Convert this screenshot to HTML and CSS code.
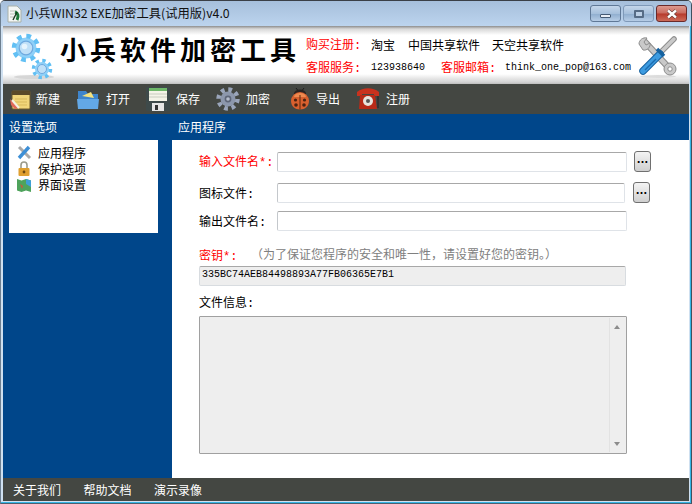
FILE: index.html
```html
<!DOCTYPE html>
<html lang="zh-CN">
<head>
<meta charset="utf-8">
<title>小兵WIN32 EXE加密工具(试用版)v4.0</title>
<link rel="stylesheet" href="styles.css">
</head>
<body>
<div class="window">
  <div class="titlebar">
    <svg class="app-icon" width="16" height="18" viewBox="0 0 16 18"><path d="M1 1h9l4 4v12H1z" fill="#f4f6f4" stroke="#a8b0a8"/><path d="M3 6h7M3 9h4M3 12h4" stroke="#b8c0b8"/><path d="M8 7c3 1 4 4 2 8" stroke="#1d7a3a" stroke-width="3" fill="none"/><path d="M6 15l4-8" stroke="#1a3a22" stroke-width="1.4"/></svg>
    <span class="title-text">小兵WIN32 EXE加密工具(试用版)v4.0</span>
    <div class="win-btns">
      <div class="wb"><span class="wb-min"></span></div>
      <div class="wb wb-mid"><span class="wb-max"></span></div>
      <div class="wb wb-close"><svg width="14" height="10" viewBox="0 0 14 10"><path d="M3 1.500l8 7M11 1.500l-8 7" stroke="#4a2a28" stroke-width="3.600"/><path d="M3 1.500l8 7M11 1.500l-8 7" stroke="#fff" stroke-width="2.400"/></svg></div>
    </div>
  </div>

  <div class="banner">
    <svg class="gears" width="50" height="52" viewBox="0 0 50 52">
      <ellipse cx="24" cy="47" rx="20" ry="2" fill="#d6d6d6"/>
      <circle cx="16" cy="18" r="10.500" fill="#8ed0f8"/>
      <circle cx="16" cy="18" r="12" fill="none" stroke="#62c0f4" stroke-width="4.500" stroke-dasharray="4.700 4.720"/>
      <circle cx="16" cy="18" r="6.800" fill="#bfe0f8" stroke="#6fa9de" stroke-width="1.200"/>
      <circle cx="14.500" cy="16.500" r="2.800" fill="#e6f4fd"/>
      <circle cx="32" cy="39" r="7" fill="#8ed0f8"/>
      <circle cx="32" cy="39" r="8.500" fill="none" stroke="#62c0f4" stroke-width="3.500" stroke-dasharray="3.340 3.340"/>
      <circle cx="32" cy="39" r="4.500" fill="#bfe0f8" stroke="#6fa9de"/>
    </svg>
    <div class="brand">小兵软件加密工具</div>
    <div class="contact">
      <div class="c-row">
        <span class="c-label">购买注册:</span>
        <span class="c-link c-taobao">淘宝</span>
        <span class="c-link c-share">中国共享软件</span>
        <span class="c-link">天空共享软件</span>
      </div>
      <div class="c-row">
        <span class="c-label">客服服务:</span>
        <span class="c-mono c-qq">123938640</span>
        <span class="c-label">客服邮箱:</span>
        <span class="c-mono c-mail">think_one_pop@163.com</span>
      </div>
    </div>
    <svg class="tools" width="42" height="44" viewBox="0 0 42 44">
      <ellipse cx="21" cy="41.500" rx="18" ry="1.500" fill="#dcdcdc"/>
      <path d="M8 7l24 26" stroke="#8d8d8d" stroke-width="6.500" stroke-linecap="round"/>
      <path d="M8 7l24 26" stroke="#c9c9c9" stroke-width="4.500" stroke-linecap="round"/>
      <path d="M2 9c0-4 4-7 8-6l-3 4 2 3 4-2c1 4-3 8-7 7z" fill="#c9c9c9" stroke="#8d8d8d"/>
      <circle cx="33" cy="34" r="6" fill="#c9c9c9" stroke="#8d8d8d"/>
      <circle cx="33" cy="34" r="2.200" fill="#fff" stroke="#8d8d8d"/>
      <path d="M37 4L23 18" stroke="#8d8d8d" stroke-width="5.500" stroke-linecap="round"/>
      <path d="M37 4L23 18" stroke="#c9c9c9" stroke-width="3.500" stroke-linecap="round"/>
      <path d="M23 19L6 36" stroke="#16619f" stroke-width="7.500" stroke-linecap="round"/>
      <path d="M23 19L6 36" stroke="#3d9be0" stroke-width="5.500" stroke-linecap="round"/>
      <path d="M19 24L8 35" stroke="#1a6cb0" stroke-width="1.400"/>
      <path d="M20 14l7 7" stroke="#16619f" stroke-width="3.500"/>
    </svg>
  </div>

  <div class="toolbar">
    <div class="tool tool-new">
      <svg width="22" height="24" viewBox="0 0 22 24"><rect x="3" y="4" width="18" height="18" rx="1" fill="#f2d67a" stroke="#6e5a2c"/><path d="M3 4h18v4H3z" fill="#5c4a28"/><path d="M6 12h12M6 15h12M6 18h12" stroke="#d9b95a"/><path d="M1 12l8 9-3 1-4-4z" fill="#e2685a"/><path d="M3 13l7 8" stroke="#f4f0e0" stroke-width="2"/></svg>
      <span>新建</span>
    </div>
    <div class="tool tool-open">
      <svg width="22" height="22" viewBox="0 0 22 22"><path d="M1 3h8l2 3h10v15H1z" fill="#3e85cc"/><path d="M5 8l9-4 3 6z" fill="#f5e27e"/><path d="M0 11h22l-1 10H1z" fill="#63a8e6"/></svg>
      <span>打开</span>
    </div>
    <div class="tool tool-save">
      <svg width="24" height="24" viewBox="0 0 24 24"><rect x="0" y="0" width="24" height="24" rx="1" fill="#3e4a4a"/><rect x="3" y="1" width="18" height="13" fill="#f4f4e8"/><rect x="3" y="1" width="18" height="3" fill="#6fb86a"/><path d="M3 7h18M3 10h18" stroke="#c8ccc0"/><rect x="6" y="16" width="12" height="8" fill="#e6e6e6"/><rect x="9" y="18" width="3" height="5" fill="#333"/></svg>
      <span>保存</span>
    </div>
    <div class="tool tool-lock">
      <svg width="24" height="24" viewBox="0 0 24 24"><circle cx="12" cy="12" r="7.500" fill="#8c97ac"/><circle cx="12" cy="12" r="9.500" fill="none" stroke="#9aa5ba" stroke-width="4.500" stroke-dasharray="3.730 3.730"/><circle cx="12" cy="12" r="3.400" fill="#5e6678"/><circle cx="12" cy="12" r="1.800" fill="#b6bdcc"/></svg>
      <span>加密</span>
    </div>
    <div class="tool tool-bug">
      <svg width="22" height="24" viewBox="0 0 22 24"><path d="M7 1l3 4M15 1l-3 4" stroke="#1c1c1c"/><ellipse cx="11" cy="6.500" rx="6" ry="4" fill="#2a2422"/><path d="M2 14a9 9 0 0 1 18 0c0 5-4 8.500-9 8.500S2 19 2 14z" fill="#d8602e"/><path d="M5 10a6 4 0 0 1 12 0z" fill="#ee8a50"/><path d="M11 8v14.500" stroke="#5a2a10"/><circle cx="6.500" cy="13" r="1.600" fill="#4a2210"/><circle cx="15.500" cy="13" r="1.600" fill="#4a2210"/><circle cx="7" cy="18" r="1.800" fill="#4a2210"/><circle cx="15" cy="18" r="1.800" fill="#4a2210"/></svg>
      <span>导出</span>
    </div>
    <div class="tool tool-reg">
      <svg width="24" height="24" viewBox="0 0 24 24"><path d="M1 5c6-5 16-5 22 0v4h-5V7H6v2H1z" fill="#c9321e"/><path d="M4 8h15l2 14H3z" fill="#b82a18"/><rect x="21" y="9" width="2" height="12" fill="#333"/><circle cx="12" cy="14" r="5" fill="#e8e4de"/><circle cx="12" cy="14" r="2" fill="#555"/></svg>
      <span>注册</span>
    </div>
  </div>

  <div class="main">
    <aside class="sidebar">
      <div class="pane-title side-title">设置选项</div>
      <ul class="tree">
        <li>
          <svg width="16" height="16" viewBox="0 0 16 16"><path d="M3 2l11 11" stroke="#aaa" stroke-width="3"/><path d="M13 2L3 13" stroke="#3d8fd6" stroke-width="3.400"/></svg>
          应用程序
        </li>
        <li>
          <svg width="16" height="16" viewBox="0 0 16 16"><path d="M5 7V4a3 3 0 0 1 6 0v3" fill="none" stroke="#9b9b8c" stroke-width="1.600"/><rect x="2.500" y="7" width="11" height="8" rx="1" fill="#e0a030"/><circle cx="8" cy="11" r="1.400" fill="#6e4a10"/></svg>
          保护选项
        </li>
        <li>
          <svg width="16" height="16" viewBox="0 0 16 16"><path d="M1 2l4.500 1.500L10 2l5 1.500V15l-5-1.500L5.500 15 1 13.500z" fill="#4fa35c"/><path d="M10 2l5 1.500V10L10 7z" fill="#3f9fd8"/><path d="M4 7l3 2-1 3z" fill="#c85a3a"/></svg>
          界面设置
        </li>
      </ul>
    </aside>
    <section class="panel">
      <div class="pane-title">应用程序</div>
      <form class="form">
        <div class="row row-input">
          <label class="lbl red">输入文件名*:</label>
          <div class="field field-a"></div>
          <div class="more">…</div>
        </div>
        <div class="row row-icon">
          <label class="lbl">图标文件:</label>
          <div class="field field-b"></div>
          <div class="more">…</div>
        </div>
        <div class="row row-output">
          <label class="lbl">输出文件名:</label>
          <div class="field field-a"></div>
        </div>
        <div class="key-head">
          <label class="red key-lbl">密钥*:</label>
          <span class="hint">（为了保证您程序的安全和唯一性，请设置好您的密钥。）</span>
        </div>
        <div class="field key-field">335BC74AEB84498893A77FB06365E7B1</div>
        <div class="info-lbl">文件信息:</div>
        <div class="info-box">
          <div class="scroll">
            <span class="arr-up"></span>
            <span class="arr-down"></span>
          </div>
        </div>
      </form>
    </section>
  </div>

  <div class="footer">
    <span>关于我们</span>
    <span>帮助文档</span>
    <span>演示录像</span>
  </div>
</div>
</body>
</html>
```
FILE: styles.css
```css
* { box-sizing: border-box; }
html, body { margin: 0; padding: 0; }
body {
  width: 692px;
  height: 504px;
  overflow: hidden;
  font-family: "Noto Sans CJK SC", "Liberation Sans", sans-serif;
  font-size: 12px;
  color: #000;
}
.window {
  width: 692px;
  height: 504px;
  display: flex;
  flex-direction: column;
  background: #cfe0f0;
  border-top: 1px solid #3a3f46;
  border-left: 1px solid #6d7f90;
  border-right: 1px solid #3f5160;
  border-bottom: 1px solid #4a6070;
  border-radius: 5px 5px 0 0;
  padding: 0 2px 2px 2px;
  overflow: hidden;
  box-shadow: inset -1px -1px 0 #35b5e5;
}
.titlebar {
  flex: 0 0 25px;
  display: flex;
  align-items: center;
  padding-left: 4px;
  margin: 0 -2px;
  background: linear-gradient(#a6bfdb, #bcd4ee);
}
.app-icon { margin-left: 2px; margin-right: 3px; }
.title-text { font-size: 12.300px; line-height: 25px; color: #111; white-space: nowrap; }
.win-btns {
  margin-left: auto;
  margin-right: 4px;
  align-self: flex-start;
  margin-top: 4px;
  display: flex;
  gap: 2px;
}
.wb {
  width: 31px;
  height: 17px;
  border: 1px solid #5f7896;
  border-radius: 3px;
  background: linear-gradient(#c4d6ea 0, #a6c0dc 50%, #8fadce 52%, #b6cde6 100%);
  display: flex;
  align-items: center;
  justify-content: center;
}
.wb-mid { border-color: #7f99b8; }
.wb-close {
  border-color: #6a2a2a;
  background: linear-gradient(#dc9a90 0, #c96a5e 48%, #b63a2c 52%, #cc6a58 100%);
}
.wb-min { width: 11px; height: 4px; margin-top: 4px; background: #e8eef6; border: 1px solid #445a74; border-radius: 1px; }
.wb-max { width: 10px; height: 8px; border: 2px solid #566c86; background: #bcd0e6; border-radius: 1px; }

.banner {
  flex: 0 0 58px;
  display: flex;
  align-items: flex-start;
  background: linear-gradient(#8d8d8d 0, #d8d8d8 3px, #fff 9px, #fff 48px, #d4d4d4 56px, #bdbdbd 58px);
  position: relative;
}
.gears { margin-left: 7px; margin-top: 4px; flex: none; }
.brand {
  flex: none;
  width: 245px;
  margin-top: 7px;
  font-size: 26px;
  line-height: 32px;
  font-weight: 700;
  letter-spacing: 4px;
  white-space: nowrap;
  color: #000;
}
.contact {
  flex: none;
  margin-left: 1px;
  margin-top: 7px;
  width: 330px;
}
.c-row { height: 23px; display: flex; align-items: center; white-space: nowrap; line-height: 18px; }
.c-label {
  color: #f00;
  font-family: "Liberation Mono", "Noto Sans CJK SC", monospace;
  font-size: 12px;
  width: 65px;
  flex: none;
  margin-top: 2px;
}
.c-taobao { width: 37px; }
.c-share { width: 84px; }
.c-mono { font-family: "Liberation Mono", monospace; font-size: 10px; }
.c-qq { width: 70px; }
.c-mail { margin-left: -1px; }
.tools { position: absolute; right: 10px; top: 9px; }

.toolbar {
  flex: 0 0 30px;
  display: flex;
  align-items: center;
  background: #444742;
  color: #fff;
  padding-left: 6px;
}
.tool { display: flex; align-items: center; height: 30px; }
.tool svg { flex: none; }
.tool span { margin-bottom: 2px; }
.tool-new { width: 67px; }
.tool-new span { margin-left: 5px; }
.tool-open { width: 70px; padding-left: 1px; }
.tool-open span { margin-left: 7px; }
.tool-save { width: 70px; }
.tool-save span { margin-left: 6px; }
.tool-lock { width: 73px; }
.tool-lock span { margin-left: 6px; }
.tool-bug { width: 67px; }
.tool-bug span { margin-left: 5px; }
.tool-reg span { margin-left: 6px; }

.main {
  flex: 1;
  min-height: 0;
  display: flex;
  background: #00468a;
}
.sidebar { flex: 0 0 169px; padding: 0 14px 0 6px; }
.pane-title {
  height: 26px;
  line-height: 26px;
  color: #fff;
  font-size: 12px;
  padding-left: 6px;
}
.side-title { padding-left: 0; }
.tree {
  list-style: none;
  margin: 0;
  padding: 5px 0 0 7px;
  height: 93px;
  background: #fff;
}
.tree li {
  height: 16px;
  display: flex;
  align-items: center;
  gap: 6px;
  line-height: 16px;
}
.panel { flex: 1; display: flex; flex-direction: column; min-width: 0; }
.form {
  flex: 1;
  background: #fff;
  padding: 11px 0 0 27px;
}
.row { display: flex; align-items: flex-start; height: 21px; }
.row-icon { margin-top: 10px; }
.row-output { margin-top: 7px; }
.lbl {
  flex: 0 0 78px;
  font-family: "Liberation Mono", "Noto Sans CJK SC", monospace;
  font-size: 12px;
  line-height: 19px;
  padding-top: 3px;
  white-space: nowrap;
}
.row-icon .lbl, .row-output .lbl { padding-top: 4px; }
.red { color: #f00; }
.field {
  height: 20px;
  border: 1px solid #dfe3e8;
  border-top: 1px solid #a8a8a8;
  border-left: 1px solid #c4c8cc;
  border-radius: 2px;
  background: #fff;
}
.row .field { margin-top: 1px; }
.field-a { width: 350px; }
.field-b { width: 348px; }
.more {
  width: 17px;
  height: 21px;
  margin-left: 7px;
  border: 1px solid #707070;
  border-radius: 3px;
  background: linear-gradient(#f4f4f4, #cfcfcf);
  font-family: "Liberation Sans", sans-serif;
  font-size: 12px;
  font-weight: bold;
  line-height: 15px;
  text-align: center;
  color: #000;
}
.row-icon .more { margin-left: 8px; }
.key-head { height: 18px; margin-top: 13px; display: flex; align-items: center; white-space: nowrap; }
.key-lbl {
  width: 52px;
  flex: none;
  font-family: "Liberation Mono", "Noto Sans CJK SC", monospace;
  margin-top: 4px;
}
.hint { color: #808080; }
.key-field {
  width: 427px;
  margin-top: 4px;
  background: #eee;
  border-color: #d8dce0;
  border-top-color: #a8a8a8;
  font-family: "Liberation Mono", monospace;
  font-size: 10px;
  line-height: 16px;
  padding-left: 2px;
}
.info-lbl {
  margin-top: 6px;
  height: 18px;
  line-height: 18px;
  padding-top: 3px;
  font-family: "Liberation Mono", "Noto Sans CJK SC", monospace;
}
.info-box {
  width: 428px;
  height: 138px;
  margin-top: 6px;
  background: #eee;
  border: 1px solid #a0a0a0;
  border-radius: 1px;
  display: flex;
  justify-content: flex-end;
  padding: 1px;
}
.scroll {
  width: 16px;
  border-left: 1px solid #e2e2e2;
  position: relative;
}
.arr-up, .arr-down {
  position: absolute;
  left: 4px;
  width: 0;
  height: 0;
  border-left: 3.500px solid transparent;
  border-right: 3.500px solid transparent;
}
.arr-up { top: 7px; border-bottom: 4px solid #8c8c8c; }
.arr-down { bottom: 6px; border-top: 4px solid #8c8c8c; }

.footer {
  flex: 0 0 23px;
  display: flex;
  align-items: center;
  gap: 22.500px;
  background: #444742;
  color: #fff;
  padding-left: 10px;
  font-size: 12px;
}
```
